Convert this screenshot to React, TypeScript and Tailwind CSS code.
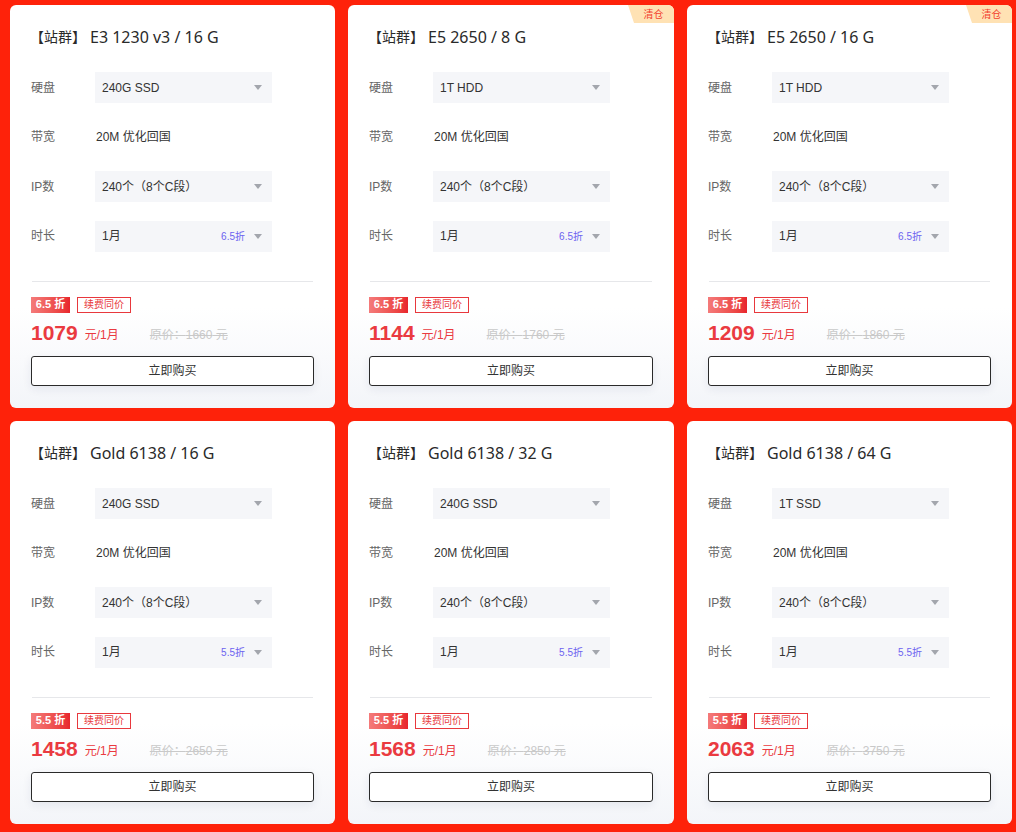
const products = [
  { model: 'E3 1230 v3 / 16 G', disk: '240G SSD', off: '6.5', price: 1079, orig: 1660, clear: false },
  { model: 'E5 2650 / 8 G', disk: '1T HDD', off: '6.5', price: 1144, orig: 1760, clear: true },
  { model: 'E5 2650 / 16 G', disk: '1T HDD', off: '6.5', price: 1209, orig: 1860, clear: true },
  { model: 'Gold 6138 / 16 G', disk: '240G SSD', off: '5.5', price: 1458, orig: 2650, clear: false },
  { model: 'Gold 6138 / 32 G', disk: '240G SSD', off: '5.5', price: 1568, orig: 2850, clear: false },
  { model: 'Gold 6138 / 64 G', disk: '1T SSD', off: '5.5', price: 2063, orig: 3750, clear: false },
];

function Arrow() {
  return (
    <svg width="8" height="5" viewBox="0 0 8 5" className="ml-[9px] shrink-0">
      <path d="M0 0h8L4 5z" fill="#a3a6ad" />
    </svg>
  );
}

function Select({ value, off }: { value: string; off?: string }) {
  return (
    <div className="flex h-[31px] w-[177px] items-center bg-[#f5f6f9] pl-[7px] pr-[10px] text-[12px] text-[#333]">
      <span className="flex-1">{value}</span>
      {off && <span className="text-[10px] text-[#6c63f0]">{off}折</span>}
      <Arrow />
    </div>
  );
}

function Row({ label, children }: { label: string; children: React.ReactNode }) {
  return (
    <div className="flex h-[31px] items-center">
      <span className="w-[64px] text-[12px] text-[#666]">{label}</span>
      {children}
    </div>
  );
}

function Card({ p }: { p: (typeof products)[number] }) {
  return (
    <div className="relative flex h-[403px] flex-col rounded-[6px] bg-linear-to-b from-white from-75% to-[#f3f5f9] px-[21px] pt-[22px]">
      {p.clear && (
        <div className="absolute right-0 top-0 flex h-[18px] w-[46px] items-center justify-center rounded-tr-[6px] bg-[#ffe2b4] pl-[5px] text-[10px] text-[#f23d2d] [clip-path:polygon(0_0,100%_0,100%_100%,6px_100%)]">
          清仓
        </div>
      )}
      <div className="flex h-[20px] items-center leading-[20px] text-[#2a2a2a] [font-family:'Noto_Sans','Noto_Sans_CJK_SC',sans-serif]">
        <span className="-ml-[1px] text-[14px]">【站群】</span>
        <span className="ml-[4px] text-[16px]">{p.model}</span>
      </div>
      <div className="mt-[25px] flex flex-col gap-[18.5px]">
        <Row label="硬盘"><Select value={p.disk} /></Row>
        <Row label="带宽"><span className="pl-px text-[12px] text-[#333]">20M 优化回国</span></Row>
        <Row label="IP数"><Select value="240个（8个C段）" /></Row>
        <Row label="时长"><Select value="1月" off={p.off} /></Row>
      </div>
      <div className="mx-px mt-[29px] h-px bg-[#e6e7ea]" />
      <div className="mt-[15px] flex h-[16px] items-center gap-[7px]">
        <span className="flex h-[16px] w-[39px] items-center justify-center bg-linear-to-r from-[#f47a7a] to-[#e8242b] text-[11px] font-bold text-white">
          {p.off} 折
        </span>
        <span className="flex h-[16px] items-center border border-[#e8383d] px-[6px] text-[10px] text-[#e8383d]">
          续费同价
        </span>
      </div>
      <div className="mt-[8px] flex h-[24px] items-center">
        <span className="text-[21px] font-bold leading-none text-[#ea3a40]">{p.price}</span>
        <span className="ml-[7px] mt-[4px] text-[12px] text-[#ea3a40]">元/1月</span>
        <span className="ml-[31px] mt-[4px] text-[12px] text-[#c9c9c9] line-through">
          原价：{p.orig} 元
        </span>
      </div>
      <button className="mt-[11px] h-[30px] w-full rounded-[3px] border border-[#2a2a2a] bg-white text-[12px] text-[#333] shadow-[0_3px_10px_rgba(20,40,90,0.08)]">
        立即购买
      </button>
    </div>
  );
}

export default function App() {
  return (
    <div className="h-[832px] w-[1016px] bg-[#fe220a] pl-[10px] pt-[5px] [font-family:'Liberation_Sans','Noto_Sans_CJK_SC',sans-serif]">
      <div className="grid w-[1002px] grid-cols-[325px_326px_325px] gap-x-[13px] gap-y-[13px]">
        {products.map((p) => (
          <Card key={p.model} p={p} />
        ))}
      </div>
    </div>
  );
}
